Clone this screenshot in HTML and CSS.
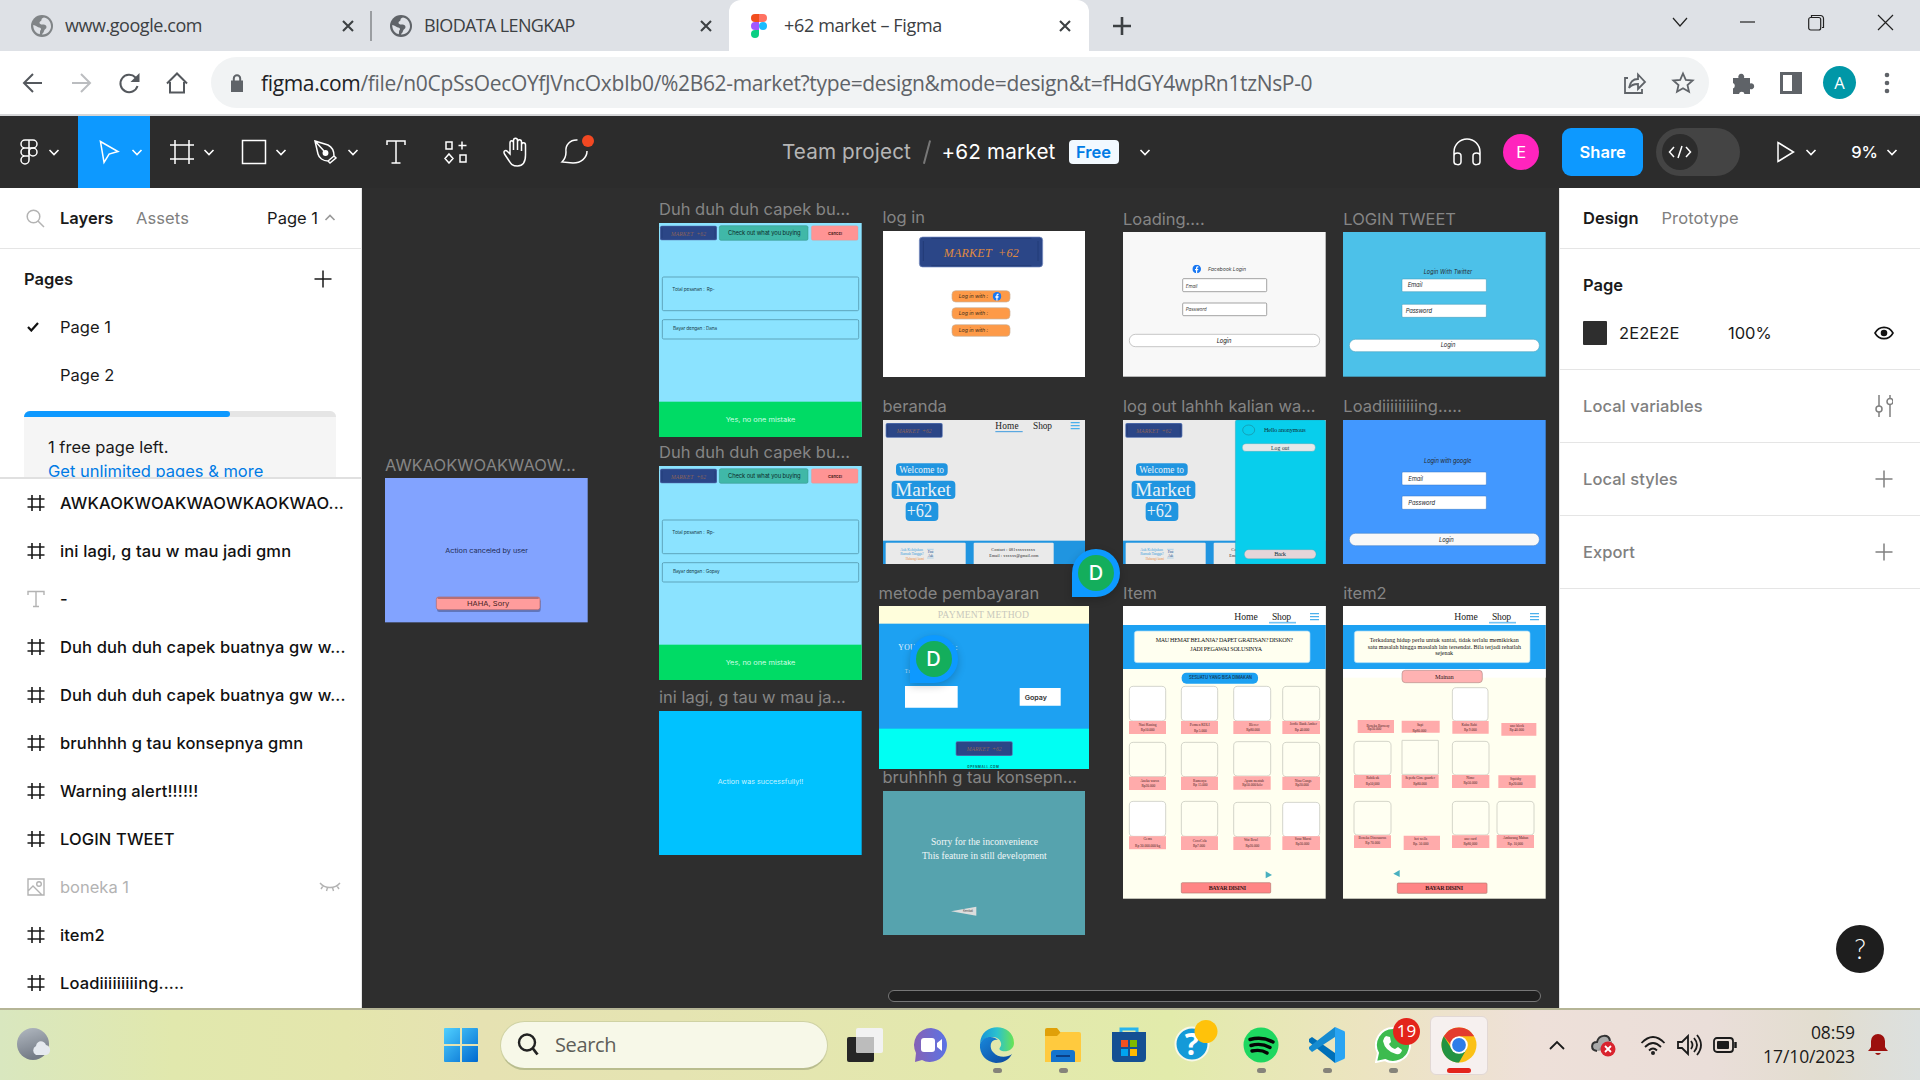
FILE: index.html
```html
<!DOCTYPE html>
<html lang="en">
<head>
<meta charset="utf-8">
<title>+62 market – Figma</title>
<link rel="stylesheet" href="styles.css">
</head>
<body>
<svg class="defs" width="0" height="0" aria-hidden="true">
  <defs>
    <symbol id="chev" viewBox="0 0 12 12"><path d="M1.5 4l4.5 4.5L10.500 4" fill="none" stroke="currentColor" stroke-width="1.6"/></symbol>
    <symbol id="x" viewBox="0 0 14 14"><path d="M2 2l10 10M12 2L2 12" stroke="currentColor" stroke-width="2.1"/></symbol>
    <symbol id="plus" viewBox="0 0 18 18"><path d="M9 .5v17M.5 9h17" stroke="currentColor" stroke-width="1.5"/></symbol>
    <symbol id="hash" viewBox="0 0 18 18"><path d="M5 1v16M13 1v16M.5 5h17M.5 13h17" stroke="currentColor" stroke-width="1.6"/></symbol>
    <symbol id="globe" viewBox="0 0 22 22"><circle cx="11" cy="11" r="11" fill="currentColor"/><path d="M13 2.500c-2 .5-2.500 1-2.500 2.500s-2 1-2 2.500 1 2 3 2 4 .5 4 2.500-2 2-2.500 4-1.500 2-2 3.500c5 .5 9-4 9-8s-2-8-7-9zM2.200 10c0 5 3 8.500 6.500 9.300.8-1.800-.2-3.300 1-4.300 1-1 0-2.500-1.700-2.500S5 10 2.200 10z" fill="#dee1e6"/></symbol>
    <symbol id="fb" viewBox="0 0 26 26"><circle cx="13" cy="13" r="13" fill="#1877f2"/><path d="M11 26v-9H8v-4h3v-3c0-3.500 2-5 5-5h2v3.500h-2c-1.200 0-1.500.7-1.500 1.700V13H18l-.7 4h-2.800v9z" fill="#fff"/></symbol>
    <g id="badge"><rect width="171" height="44" rx="5" fill="#5572b0"/><rect x="2" y="2" width="167" height="40" rx="4" fill="#2b4687"/><path d="M6 7v30M165 7v30" stroke="#223a75" stroke-width="2"/><text class="serif it" x="33" y="30" font-size="17" fill="#8a6259" textLength="105" xml:space="preserve">MARKET  +62</text></g>
    <g id="burger" stroke="#4bb0ec" stroke-width="4"><path d="M0 2h27M0 11h27M0 20h27"/></g>
    <g id="welcome">
      <rect x="39" y="130" width="155" height="37" rx="11" fill="#2095e0"/><text class="serif" x="49" y="158" font-size="28" fill="#e9f1f6" textLength="134">Welcome to</text>
      <rect x="26" y="182" width="191" height="55" rx="12" fill="#2095e0"/><text class="serif" x="36" y="227" font-size="56" fill="#e9f1f6" textLength="168" lengthAdjust="spacingAndGlyphs">Market</text>
      <rect x="68" y="246" width="98" height="57" rx="12" fill="#2095e0"/><text class="serif" x="71" y="291" font-size="54" fill="#e9f1f6" textLength="76" lengthAdjust="spacingAndGlyphs">+62</text>
      <rect y="362" width="608" height="72" fill="#2095e0"/>
      <rect x="8" y="368" width="240" height="66" rx="3" fill="#eaeaea"/><rect x="272" y="368" width="240" height="66" rx="3" fill="#eaeaea"/>
      <g class="serif" font-size="12"><text x="52" y="394" fill="#4aa5dd" textLength="68">Ask Kebijakan</text><text x="52" y="405" fill="#4aa5dd" textLength="70">Rumah Tangga?</text><text x="68" y="419" fill="#e98d42" font-size="9" textLength="55">Hubungi kami</text><text x="134" y="399" fill="#31609a" textLength="17">Fast</text><text x="134" y="411" fill="#31609a" textLength="17">Ask</text><path d="M132 388h20M132 414h20" stroke="#4aa5dd"/>
      <text x="325" y="394" fill="#222" textLength="131">Contact : 081xxxxxxxxx</text><text x="319" y="411" fill="#222" textLength="147">Email : xxxxxx@gmail.com</text></g>
    </g>
    <g id="checkout">
      <rect width="608" height="644" fill="#8be3ff"/>
      <use href="#badge" x="3" y="8"/>
      <rect x="181" y="8" width="266" height="44" rx="5" fill="#40b8a8" stroke="#339183" stroke-width="1.500"/><text x="207" y="37" font-size="17.500" fill="#0d2b2a" textLength="218">Check out what you buying</text>
      <rect x="457" y="8" width="140" height="44" rx="5" fill="#ff9494" stroke="#c9a0a5"/><text x="507" y="36" font-size="12" font-weight="600" fill="#311" textLength="42">Cancel</text>
      <rect x="10" y="162" width="589" height="101" rx="4" fill="none" stroke="#5599ae" stroke-width="2.500"/><text x="40" y="205" font-size="14" fill="#173c48" textLength="127" xml:space="preserve">Total pesanan :  Rp-</text>
      <rect x="10" y="290" width="589" height="58" rx="4" fill="none" stroke="#5599ae" stroke-width="2.500"/>
      <rect y="536" width="608" height="108" fill="#00db65"/><text x="200" y="597" font-size="19" fill="#d2ffe5" textLength="209" lengthAdjust="spacingAndGlyphs">Yes, no one mistake</text>
    </g>
    <g id="shopnav">
      <rect width="608" height="57" fill="#fff"/><text class="serif" x="334" y="41" font-size="29" fill="#222" textLength="70">Home</text><text class="serif" x="447" y="41" font-size="29" fill="#222" textLength="57">Shop</text><path d="M438 50h81" stroke="#75c4f5" stroke-width="5"/><use href="#burger" x="561" y="21"/>
      <rect y="57" width="608" height="132" fill="#1da1f2"/><rect x="34" y="75" width="527" height="95" rx="8" fill="#fffff0" stroke="#9ed7f7" stroke-width="2"/>
    </g>
  </defs>
</svg>

<header class="tabs">
  <div class="tab tab-a"><svg class="fav dim" viewBox="0 0 22 22"><use href="#globe"/></svg><span class="t1">www.google.com</span><svg class="close"><use href="#x"/></svg></div>
  <div class="tab tab-b"><svg class="fav" viewBox="0 0 22 22"><use href="#globe"/></svg><span class="t2">BIODATA LENGKAP</span><svg class="close"><use href="#x"/></svg></div>
  <div class="tab tab-on"><svg class="figfav" viewBox="0 0 16 24"><path d="M8 0H4a4 4 0 000 8h4z" fill="#f24e1e"/><path d="M8 0h4a4 4 0 010 8H8z" fill="#ff7262"/><path d="M8 8H4a4 4 0 000 8h4z" fill="#a259ff"/><circle cx="12" cy="12" r="4" fill="#1abcfe"/><path d="M8 16H4a4 4 0 104 4z" fill="#0acf83"/></svg><span class="t3">+62 market – Figma</span><svg class="close"><use href="#x"/></svg></div>
  <svg class="newtab" viewBox="0 0 18 18"><path d="M9 0v18M0 9h18" stroke="#3c4043" stroke-width="2.600"/></svg>
  <div class="win">
    <svg width="16" height="10"><path d="M1 1l7 8 7-8" class="thin"/></svg>
    <svg width="16" height="16"><path d="M0 8h15" class="thin"/></svg>
    <svg width="17" height="17"><path d="M3.500 3V1.500h9a3 3 0 013 3v9H14" class="thin"/><rect x=".7" y="3.500" width="12" height="12.500" rx="2" class="thin"/></svg>
    <svg width="17" height="17"><path d="M1 1l15 15M16 1L1 16" class="thin"/></svg>
  </div>
</header>

<nav class="addr">
  <svg width="48" height="24" viewBox="0 0 48 24" class="nv"><path d="M42 12H24M33 3l-9 9 9 9"/></svg>
  <svg width="48" height="24" viewBox="0 0 48 24" class="nv off"><path d="M24 12h18M33 3l9 9-9 9"/></svg>
  <svg width="48" height="24" viewBox="0 0 48 24" class="nv"><path d="M41.500 15A8.700 8.700 0 1139.500 6.500l1.500 2"/><path d="M43.500 2v9h-9z" class="fill"/></svg>
  <svg width="48" height="24" viewBox="0 0 48 24" class="nv"><path d="M26 11v10.500h14V11M23 12.500l10-10 10 10"/></svg>
  <div class="omni">
    <svg class="lock" width="14" height="18" viewBox="0 0 14 18"><path d="M1 6.500h12V18H1z" fill="#5f6368"/><path d="M3.800 7V4.500a3.200 3.200 0 016.400 0V7" fill="none" stroke="#5f6368" stroke-width="2"/></svg>
    <span class="url"><b>figma.com</b>/file/n0CpSsOecOYfJVncOxbIb0/%2B62-market?type=design&amp;mode=design&amp;t=fHdGY4wpRn1tzNsP-0</span>
    <svg class="oi" viewBox="0 0 24 24"><path d="M5 7H2v15h17v-4M6 17c1-6 4-9 9-9V3.500L22 11l-7 7v-5c-4 0-7 1-9 4z"/></svg>
    <svg class="oi" viewBox="0 0 24 24"><path d="M12 2.500l2.800 6.300 6.900.7-5.200 4.600 1.500 6.700-6-3.500-6 3.500 1.500-6.700-5.200-4.600 6.900-.7z"/></svg>
  </div>
  <div class="exts">
    <svg width="24" height="24" viewBox="0 0 24 24"><path d="M2 7h5.500a3 3 0 115.500 0H19v5.500a3 3 0 110 5.500v5h-5.500a2.800 2.800 0 00-5.500 0H2v-5.500a3 3 0 000-5.500z" fill="#5f6368"/></svg>
    <svg width="22" height="22" viewBox="0 0 22 22"><path d="M0 0h22v22H0zM3 3v16h9V3z" fill="#5f6368" fill-rule="evenodd"/></svg>
    <span class="me">A</span>
    <svg width="6" height="22" viewBox="0 0 6 22"><g fill="#5f6368"><circle cx="3" cy="3" r="2.300"/><circle cx="3" cy="11" r="2.300"/><circle cx="3" cy="19" r="2.300"/></g></svg>
  </div>
</nav>

<div class="fbar">
  <div class="tool logo"><svg width="18" height="26" viewBox="0 0 18 26"><path d="M9 1H5a4 4 0 000 8h4zM9 1h4a4 4 0 010 8H9zM9 9H5a4 4 0 000 8h4zM5 17a4 4 0 104 4v-4z"/><circle cx="13" cy="13" r="4"/></svg><svg class="cv"><use href="#chev"/></svg></div>
  <div class="tool on"><svg width="22" height="26" viewBox="0 0 22 26"><path d="M2 2l17 11-9 2-5.500 8z" transform="rotate(-3 11 13)"/></svg><svg class="cv"><use href="#chev"/></svg></div>
  <div class="tool"><svg width="26" height="26" viewBox="0 0 26 26"><path d="M6 1v24M20 1v24M1 6h24M1 20h24"/></svg><svg class="cv"><use href="#chev"/></svg></div>
  <div class="tool"><svg width="26" height="26" viewBox="0 0 26 26"><path d="M1.500 1.500h23v23h-23z"/></svg><svg class="cv"><use href="#chev"/></svg></div>
  <div class="tool"><svg width="26" height="26" viewBox="0 0 26 26"><path d="M2 2l13 4c4 2 6 6 6 11l2 2-6 5-2-2c-5 0-9-3-10-7zM2 2l9 10M21 17l-6 5"/><circle cx="12.500" cy="14" r="2.200" fill="#fff"/></svg><svg class="cv"><use href="#chev"/></svg></div>
  <div class="tool one"><svg width="20" height="26" viewBox="0 0 20 26"><path d="M1 6V2h18v4M10 2v22M5.500 24h9"/></svg></div>
  <div class="tool one"><svg width="24" height="24" viewBox="0 0 24 24"><path d="M2 2h6v7H2zM18 1.500v8M14.500 5.500h8M16 15h6v7h-6zM5 14l4 4.500L5 23l-4-4.500z"/></svg></div>
  <div class="tool one"><svg width="28" height="30" viewBox="0 0 28 30"><path d="M8 17V6c0-3 3.500-3 3.500 0v7V3.500c0-3 4-3 4 0V13 5c0-3 4-3 4 0v9V8c0-3 4-3 4 0v10c0 7-3 11-8 11-6 0-7-3-9-6l-4-6c-1.500-3 1-4.500 3-2.500z"/></svg></div>
  <div class="tool one"><svg class="cmt" width="34" height="34" viewBox="0 0 34 34"><path d="M17.500 6C10 5.500 5 11 6 18c0 3 0 6-4 10l11 1c8 0 14-5 14-12"/><circle cx="28" cy="7" r="6" class="dot"/></svg></div>
  <div class="title"><span class="proj">Team project</span><i></i><span class="file">+62 market</span><em>Free</em><svg class="cv"><use href="#chev"/></svg></div>
  <div class="fright">
    <svg width="30" height="28" viewBox="0 0 30 28"><path d="M2 24V14a13 13 0 0126 0v10M2 18c0-4 7-4 7 0v6c0 4-7 3-7 0zM28 18c0-4-7-4-7 0v6c0 4 7 3 7 0z"/></svg>
    <span class="av">E</span>
    <span class="share">Share</span>
    <span class="toggle"><span><svg width="24" height="14" viewBox="0 0 24 14"><path d="M6 2L1.500 7 6 12M18 2l4.500 5-4.500 5M14 1l-4 12"/></svg></span></span>
    <svg class="play" width="20" height="22" viewBox="0 0 20 22"><path d="M2 1.500v19L17.500 11z"/></svg><svg class="cv"><use href="#chev"/></svg>
    <span class="zoom">9%</span><svg class="cv"><use href="#chev"/></svg>
  </div>
</div>

<main class="work">
  <aside class="left">
    <div class="lhead"><svg width="19" height="19" viewBox="0 0 19 19"><circle cx="7.500" cy="7.500" r="6.300" fill="none" stroke="#b3b3b3" stroke-width="1.500"/><path d="M12 12l6 6" stroke="#b3b3b3" stroke-width="1.500"/></svg><b>Layers</b><span class="muted">Assets</span><span class="pg">Page 1</span><svg class="cv up"><use href="#chev"/></svg></div>
    <div class="pages">
      <div class="ph"><b>Pages</b><svg width="18" height="18"><use href="#plus"/></svg></div>
      <div class="prow"><svg width="12" height="10" viewBox="0 0 12 10"><path d="M1 5l3.300 3.500L11 1" fill="none" stroke="#111" stroke-width="2.200"/></svg>Page 1</div>
      <div class="prow"><svg width="12" height="10"></svg>Page 2</div>
      <div class="card"><div class="bar"><div></div></div><p>1 free page left.<br><a>Get unlimited pages &amp; more</a></p></div>
    </div>
    <div class="layers">
      <div class="row"><svg><use href="#hash"/></svg><b>AWKAOKWOAKWAOWKAOKWAO...</b></div>
      <div class="row"><svg><use href="#hash"/></svg><b>ini lagi, g tau w mau jadi gmn</b></div>
      <div class="row"><svg class="g" viewBox="0 0 18 18"><path d="M1 5V1.500h16V5M9 1.500v15M6 16.500h6" fill="none" stroke="currentColor" stroke-width="1.400"/></svg><b>-</b></div>
      <div class="row"><svg><use href="#hash"/></svg><b>Duh duh duh capek buatnya gw w...</b></div>
      <div class="row"><svg><use href="#hash"/></svg><b>Duh duh duh capek buatnya gw w...</b></div>
      <div class="row"><svg><use href="#hash"/></svg><b>bruhhhh g tau konsepnya gmn</b></div>
      <div class="row"><svg><use href="#hash"/></svg><b>Warning alert!!!!!!</b></div>
      <div class="row"><svg><use href="#hash"/></svg><b>LOGIN TWEET</b></div>
      <div class="row hid"><svg class="g" viewBox="0 0 18 18"><path d="M1 1h16v16H1zM1 13l5-5 9 9" fill="none" stroke="currentColor" stroke-width="1.400"/><circle cx="12" cy="6" r="2.300" fill="none" stroke="currentColor" stroke-width="1.400"/></svg><span>boneka 1</span><svg class="g eye" viewBox="0 0 22 12"><path d="M1 2c5 6 15 6 20 0M4 5L2 8M8.500 6.500L7.500 10M13.500 6.500l1 3.500M18 5l2 3" fill="none" stroke="currentColor" stroke-width="1.400"/></svg></div>
      <div class="row"><svg><use href="#hash"/></svg><b>item2</b></div>
      <div class="row"><svg><use href="#hash"/></svg><b>Loadiiiiiiiiing.....</b></div>
    </div>
  </aside>

  <section class="canvas">
    <div class="frame f-awk"><span>AWKAOKWOAKWAOW...</span>
      <svg viewBox="0 0 608 433"><rect width="608" height="433" fill="#82a3ff"/><text x="181" y="224" font-size="19" fill="#1d2b50" textLength="248" lengthAdjust="spacingAndGlyphs">Action canceled by user</text><rect x="156" y="363" width="311" height="39" rx="7" fill="#5f76bd"/><rect x="154" y="357" width="311" height="38" rx="7" fill="#ff9c9c" stroke="#a9686e" stroke-width="2"/><path d="M158 360h303" stroke="#b96f74" stroke-width="6"/><text x="246" y="383" font-size="19" fill="#421c1e" textLength="127" lengthAdjust="spacingAndGlyphs">HAHA, Sory</text></svg></div>

    <div class="frame f-duh1"><span>Duh duh duh capek bu...</span>
      <svg viewBox="0 0 608 644"><use href="#checkout"/><text x="42" y="321" font-size="14" fill="#173c48" textLength="132">Bayar dengan : Dana</text></svg></div>
    <div class="frame f-duh2"><span>Duh duh duh capek bu...</span>
      <svg viewBox="0 0 608 644"><use href="#checkout"/><text x="42" y="321" font-size="14" fill="#173c48" textLength="140">Bayar dengan : Gopay</text></svg></div>
    <div class="frame f-ini"><span>ini lagi, g tau w mau ja...</span>
      <svg viewBox="0 0 608 434"><rect width="608" height="434" fill="#00c2ff"/><text x="176" y="218" font-size="20" fill="#c8f3ff" textLength="257" lengthAdjust="spacingAndGlyphs">Action was successfully!!</text></svg></div>

    <div class="frame f-login"><span>log in</span>
      <svg viewBox="0 0 608 438"><rect width="608" height="438" fill="#fff"/><rect x="109" y="18" width="370" height="90" rx="10" fill="#2b4687" stroke="#7890c4" stroke-width="2"/><path d="M121 30v60M465 30v60M145 22h300M145 104h300" stroke="#203770" stroke-width="2"/><text class="serif it" x="182" y="79" font-size="36" fill="#e08b3e" textLength="225" xml:space="preserve">MARKET  +62</text>
        <g fill="#fd9a48" stroke="#c9b49f" stroke-width="2"><rect x="207" y="179" width="174" height="34" rx="11"/><rect x="207" y="230" width="174" height="34" rx="11"/><rect x="207" y="281" width="174" height="35" rx="11"/></g>
        <g class="it" font-size="16" fill="#46311d"><text x="227" y="202" textLength="88">Log in with :</text><text x="227" y="253" textLength="88">Log in with :</text><text x="227" y="304" textLength="88">Log in with :</text></g><use href="#fb" x="329" y="183" width="26" height="26"/></svg></div>
    <div class="frame f-beranda"><span>beranda</span>
      <svg viewBox="0 0 608 433"><rect width="608" height="433" fill="#eaeaea"/><use href="#badge" x="8" y="9"/><use href="#welcome"/><text class="serif" x="337" y="26" font-size="28" fill="#222" textLength="70">Home</text><text class="serif" x="450" y="26" font-size="28" fill="#222" textLength="57">Shop</text><path d="M337 35h82" stroke="#3d9ade" stroke-width="3"/><use href="#burger" x="563" y="6"/></svg></div>
    <div class="frame wide f-metode"><span>metode pembayaran</span>
      <svg viewBox="0 0 632 489"><rect width="632" height="489" fill="#1da1f2"/><rect width="632" height="53" fill="#fffedc"/><text class="serif" x="176" y="36" font-size="29" fill="#c8c8bc" textLength="274">PAYMENT METHOD</text><text class="serif" x="58" y="132" font-size="23" fill="#e4f4fd" textLength="178">YOUR CHOICE :</text><text class="serif" x="77" y="200" font-size="16" fill="#b8ddf5" textLength="60">Try use</text><path d="M78 240h158v65H78zM422 246h123v53H422z" fill="#fff"/><text x="437" y="281" font-size="19" font-weight="600" fill="#333" textLength="67" lengthAdjust="spacingAndGlyphs">Gopay</text><rect y="368" width="632" height="121" fill="#00fff3"/><use href="#badge" x="230" y="406"/><text x="265" y="485" font-size="9" font-weight="700" fill="#066" textLength="94">OPENMALL.COM</text></svg></div>
    <div class="frame f-bruh"><span>bruhhhh g tau konsepn...</span>
      <svg viewBox="0 0 608 434"><rect width="608" height="434" fill="#56a3ae"/><g class="serif" font-size="28" fill="#f0f7f8"><text x="144" y="162" textLength="321" lengthAdjust="spacingAndGlyphs">Sorry for the inconvenience</text><text x="117" y="204" textLength="374" lengthAdjust="spacingAndGlyphs">This feature in still development</text></g><path d="M204 361l76-14v27z" fill="#ddd"/><text x="240" y="364" font-size="9" fill="#555" textLength="30">Kembali</text></svg></div>

    <div class="frame f-loading"><span>Loading....</span>
      <svg viewBox="0 0 608 434"><rect width="608" height="434" fill="#f8f8f8"/><use href="#fb" x="208" y="98" width="26" height="26"/><g fill="#fff" stroke="#777" stroke-width="2"><rect x="179" y="140" width="252" height="39" rx="3"/><rect x="179" y="213" width="252" height="38" rx="3"/><rect x="19" y="307" width="571" height="37" rx="18" stroke="#aaa"/></g><g class="it" fill="#444" font-size="14"><text x="255" y="116" font-size="15.500" textLength="114">Facebook Login</text><text x="188" y="167" textLength="35">Email</text><text x="188" y="236" textLength="63">Password</text><text x="281" y="332" font-size="17.500" fill="#222" textLength="44">Login</text></g></svg></div>
    <div class="frame f-logout"><span>log out lahhh kalian wa...</span>
      <svg viewBox="0 0 608 433"><rect width="608" height="433" fill="#eaeaea"/><use href="#badge" x="7" y="9"/><use href="#welcome"/><rect x="337" width="271" height="433" rx="5" fill="#08ceec" stroke="#3890a0"/><ellipse cx="377" cy="30" rx="18" ry="15" fill="none" stroke="#237684" stroke-width="1.500"/><g class="serif" fill="#10343a" font-size="19"><text x="423" y="36" textLength="125">Hello anonymous</text><rect x="358" y="71" width="219" height="23" rx="11" fill="#e6e9ea" stroke="#5c9aa3"/><text x="444" y="89" font-size="17" textLength="55">Log out</text><rect x="364" y="389" width="215" height="27" rx="13" fill="#e5d5d9" stroke="#5c9aa3"/><text x="454" y="409" textLength="35">Back</text></g></svg></div>
    <div class="frame f-tweet"><span>LOGIN TWEET</span>
      <svg viewBox="0 0 608 434"><rect width="608" height="434" fill="#4cc1e9"/><g fill="#fff" stroke="#3b97b6" stroke-width="1.500"><rect x="177" y="141" width="253" height="38" rx="3"/><rect x="177" y="217" width="253" height="39" rx="3"/><rect x="19" y="322" width="570" height="37" rx="18"/></g><g class="it" fill="#262b30" font-size="17.500"><text x="242" y="125" font-size="16.500" textLength="145">Login With Twitter</text><text x="194" y="166" textLength="44">Email</text><text x="188" y="243" textLength="79">Password</text><text x="293" y="346" textLength="44">Login</text></g></svg></div>
    <div class="frame f-google"><span>Loadiiiiiiiiing.....</span>
      <svg viewBox="0 0 608 433"><rect width="608" height="433" fill="#4298ff"/><g fill="#fff" stroke="#3576c5" stroke-width="1.500"><rect x="177" y="156" width="253" height="39" rx="3"/><rect x="177" y="228" width="253" height="40" rx="3"/><rect x="19" y="340" width="570" height="37" rx="18" fill="#f8f8f8"/></g><g class="it" fill="#262b30" font-size="17.500"><text x="243" y="129" textLength="142">Login with google</text><text x="196" y="182" textLength="44">Email</text><text x="196" y="256" textLength="80">Password</text><text x="288" y="365" textLength="44">Login</text></g></svg></div>

    <div class="frame f-item"><span>Item</span>
      <svg viewBox="0 0 608 878"><rect width="608" height="878" fill="#fffff0"/><use href="#shopnav"/>
        <g class="serif" font-size="18" fill="#111"><text x="98" y="109" textLength="412">MAU HEMAT BELANJA? DAPET GRATISAN? DISKON?</text><text x="202" y="134" textLength="215">JADI PEGAWAI SOLUSINYA</text></g>
        <rect x="176" y="200" width="229" height="33" rx="14" fill="#1da1f2"/><text x="198" y="220" font-size="12.500" font-weight="600" fill="#123c60" textLength="189">SESUATU YANG BISA DIMAKAN</text>
        <g class="box"><rect class="w" x="19" y="241" width="109" height="104" rx="12"/><rect class="w" x="175" y="241" width="109" height="104" rx="12"/><rect class="w" x="332" y="241" width="111" height="104" rx="12"/><rect x="479" y="241" width="111" height="104" rx="12"/>
        <rect x="19" y="409" width="109" height="103" rx="12"/><rect x="175" y="409" width="109" height="103" rx="12"/><rect x="332" y="407" width="111" height="103" rx="12"/><rect x="479" y="409" width="111" height="103" rx="12"/>
        <rect class="w" x="19" y="586" width="109" height="105" rx="12"/><rect x="175" y="586" width="109" height="105" rx="12"/><rect x="332" y="589" width="111" height="103" rx="12"/><rect class="w" x="479" y="589" width="111" height="103" rx="12"/></g>
        <path class="pink" d="M18 345h111v39H18zM174 345h111v39H174zM331 345h112v39H331zM478 345h113v39H478zM18 512h111v40H18zM174 512h111v40H174zM331 511h112v40H331zM478 512h113v40H478zM18 691h111v39H18zM174 691h111v41H174zM331 692h112v40H331zM478 691h113v41H478z"/>
        <g class="tiny"><text x="74" y="360">Nasi Kuning</text><text x="74" y="374">Rp10.000</text><text x="230" y="360">Permen KOLI</text><text x="232" y="377">Rp 5.000</text><text x="392" y="360">Blever</text><text x="390" y="374">Rp80.000</text><text x="541" y="357">Jordie Bank Amber</text><text x="537" y="374">Rp 40.000</text>
        <text x="80" y="529">Aneka waroz</text><text x="76" y="542">Rp20.000</text><text x="230" y="527">Ramenya</text><text x="232" y="541">Rp 15.000</text><text x="393" y="527">Ayam mentah</text><text x="388" y="541">Rp50.000/kilo</text><text x="540" y="527">Nina Gangs</text><text x="537" y="541">Rp20.000</text>
        <text x="74" y="703">Gems</text><text x="74" y="724">Rp 30.000.000/kg</text><text x="230" y="708">CocoCola</text><text x="228" y="723">Rp7.000</text><text x="384" y="705">Wat Bowl</text><text x="388" y="724">Rp20.000</text><text x="540" y="703">Susu Murni</text><text x="538" y="718">Rp30.000</text></g>
        <path d="M428 796v21l19-10z" fill="#49b0bf"/><rect x="175" y="830" width="268" height="31" rx="3" fill="#ff8585" stroke="#b57871" stroke-width="2"/><text class="serif" x="257" y="852" font-size="18" font-weight="600" fill="#3b1717" textLength="112">BAYAR DISINI</text></svg></div>
    <div class="frame f-item2"><span>item2</span>
      <svg viewBox="0 0 608 878"><rect width="608" height="878" fill="#fffff0"/><rect y="188" width="608" height="27" fill="#fff"/><use href="#shopnav"/>
        <g class="serif" font-size="18" fill="#111"><text x="80" y="108" textLength="447">Terkadang hidup perlu untuk santai, tidak terlalu memikirkan</text><text x="74" y="128" textLength="460">satu masalah hingga masalah lain tersendat. Bila terjadi rehatlah</text><text x="277" y="147" textLength="53">sejenak</text></g>
        <rect x="177" y="193" width="241" height="37" rx="10" fill="#ffb2b2" stroke="#9b7c78" stroke-width="1.500"/><text class="serif" x="276" y="218" font-size="19" fill="#301818" textLength="56">Mainan</text>
        <g class="box"><rect class="w" x="328" y="245" width="107" height="100" rx="12"/><rect x="33" y="406" width="111" height="101" rx="12"/><rect x="177" y="403" width="109" height="102" rx="1"/><rect x="328" y="406" width="110" height="101" rx="12"/><rect x="33" y="586" width="111" height="101" rx="12"/><rect x="328" y="586" width="110" height="101" rx="12"/><rect x="462" y="586" width="111" height="101" rx="12"/></g>
        <path class="pink" d="M44 342h109v39H44zM176 344h114v36H176zM328 345h109v38H328zM475 351h105v38H475zM33 507h111v39H33zM176 507h111v39H176zM327 507h112v39H327zM466 508h112v38H466zM33 688h111v38H33zM182 689h109v43H182zM327 688h112v38H327zM461 687h112v39H461z"/>
        <g class="tiny"><text x="105" y="362">Boneka Barneay</text><text x="94" y="373">Rp30.000</text><text x="231" y="359">Sapi</text><text x="229" y="377">Rp80.000</text><text x="379" y="359">Kubu Rubi</text><text x="382" y="374">Rp 9.000</text><text x="522" y="363">uno block</text><text x="521" y="376">Rp 40.000</text>
        <text x="89" y="518">Rubik uk</text><text x="89" y="536">Rp50,000</text><text x="231" y="518">Sepeda Gim. guarder</text><text x="231" y="537">Rp80.000</text><text x="382" y="518">Nimo</text><text x="382" y="534">Rp50.000</text><text x="518" y="523">Squishy</text><text x="518" y="537">Rp20.000</text>
        <text x="88" y="698">Boneka Dinosaurus</text><text x="89" y="713">Rp 70.000</text><text x="233" y="703">hot wells</text><text x="233" y="718">Rp. 50.000</text><text x="382" y="703">uno card</text><text x="382" y="716">Rp80,000</text><text x="518" y="698">Ambarang Mahan</text><text x="517" y="716">Rp. 10,000</text></g>
        <path d="M170 792v21l-19-10z" fill="#49b0bf"/><rect x="163" y="831" width="269" height="31" rx="3" fill="#ff8585" stroke="#b57871" stroke-width="2"/><text class="serif" x="247" y="852" font-size="18" font-weight="600" fill="#3b1717" textLength="113">BAYAR DISINI</text></svg></div>

    <div class="pin p1"><span>D</span></div>
    <div class="pin p2"><span>D</span></div>
    <div class="scroll"></div>
  </section>

  <aside class="right">
    <div class="rhead"><b>Design</b><span class="muted">Prototype</span></div>
    <div class="rpage"><b>Page</b><div class="fillrow"><i></i><span class="hex">2E2E2E</span><span class="pct">100%</span><svg width="20" height="14" viewBox="0 0 20 14"><path d="M1 7c4-7.500 14-7.500 18 0-4 7.500-14 7.500-18 0z" fill="none" stroke="#111" stroke-width="1.600"/><circle cx="10" cy="7" r="3.300" fill="#111"/></svg></div></div>
    <div class="rsec"><b>Local variables</b><svg width="18" height="22" viewBox="0 0 18 22"><path d="M4 0v11M4 17v5M15 0v3.500M15 9.500V22" stroke="#808080" stroke-width="1.500"/><circle cx="4" cy="14" r="3" fill="none" stroke="#808080" stroke-width="1.500"/><circle cx="15" cy="6.500" r="3" fill="none" stroke="#808080" stroke-width="1.500"/></svg></div>
    <div class="rsec"><b>Local styles</b><svg width="18" height="18"><use href="#plus"/></svg></div>
    <div class="rsec"><b>Export</b><svg width="18" height="18"><use href="#plus"/></svg></div>
    <span class="help">?</span>
  </aside>
</main>

<footer class="taskbar">
  <div class="ic weather"><svg width="36" height="36" viewBox="0 0 36 36"><defs><linearGradient id="wg" x2=".3" y2="1"><stop stop-color="#b2b9c1"/><stop offset="1" stop-color="#747b86"/></linearGradient></defs><circle cx="17" cy="17" r="16" fill="url(#wg)"/><path d="M20 28a5 5 0 010-9c1-6 8-6 10-1 6 1 5 10 0 10z" fill="#e5e9ef"/></svg></div>
  <div class="ic start"><svg width="36" height="36" viewBox="0 0 36 36"><defs><linearGradient id="ws" x2="1" y2="1"><stop stop-color="#4fd0ff"/><stop offset="1" stop-color="#0069cf"/></linearGradient></defs><path d="M1 2q0-1 1-1h15v16H1zM19 1h15q1 0 1 1v15H19zM1 19h16v16H2q-1 0-1-1zM19 19h16v15q0 1-1 1H19z" fill="url(#ws)"/></svg></div>
  <div class="search"><svg width="24" height="24" viewBox="0 0 24 24"><circle cx="11" cy="9.500" r="8" fill="none" stroke="#222" stroke-width="2.400"/><path d="M16.500 15l5 6.500" stroke="#222" stroke-width="2.800"/></svg><span>Search</span></div>
  <div class="ic"><svg width="36" height="36" viewBox="0 0 36 36"><rect y="10" width="27" height="25" rx="2" fill="#262626"/><rect x="9" y="1" width="27" height="25" rx="2" fill="#f2f2f2"/><path d="M9 10h18v16H11q-2 0-2-2z" fill="#bcbcbc"/></svg></div>
  <div class="ic"><svg width="36" height="36" viewBox="0 0 36 36"><defs><linearGradient id="ch" x2="1"><stop stop-color="#8661b5"/><stop offset="1" stop-color="#5b73e5"/></linearGradient></defs><path d="M18 1a17 17 0 11-9 32l-7 2 1-9A17 17 0 0118 1z" fill="url(#ch)"/><rect x="8" y="11" width="14" height="14" rx="3" fill="#fff"/><path d="M24 16l5-4v12l-5-4z" fill="#fff"/></svg></div>
  <div class="ic run"><svg width="36" height="36" viewBox="0 0 36 36"><defs><linearGradient id="e1" x2="1"><stop stop-color="#1593d9"/><stop offset=".5" stop-color="#2bc1cf"/><stop offset="1" stop-color="#69e452"/></linearGradient><linearGradient id="e2" x2="1" y2="1"><stop stop-color="#1888dc"/><stop offset="1" stop-color="#0d4599"/></linearGradient></defs><path d="M1 17C2-6 35-4 35 16c0 8-10 10-14 7-2-2 2-3 1-7C20 8 6 8 1 17z" fill="url(#e1)"/><path d="M1 17c3-8 13-9 18-4-8-2-9 8-5 12 5 6 14 6 19 2-3 6-9 9-16 9C7 35 0 27 1 17z" fill="url(#e2)"/></svg></div>
  <div class="ic run"><svg width="36" height="36" viewBox="0 0 36 36"><path d="M0 3q0-2 2-2h10l4 5v6H0z" fill="#e0a008"/><path d="M0 9h12l4-4h18q2 0 2 2v27q0 1-1 1H0z" fill="#ffca3e"/><path d="M6 35V26q0-3 3-3h18q3 0 3 3v9z" fill="#1474ce"/><rect x="11" y="28" width="14" height="2" fill="#0b3f85"/></svg></div>
  <div class="ic"><svg width="36" height="36" viewBox="0 0 36 36"><path d="M10 8V2h16v6" fill="none" stroke="#27b5ee" stroke-width="3"/><path d="M1 5h34v26q0 4-4 4H5q-4 0-4-4z" fill="#155093"/><path d="M10 13h7v7h-7z" fill="#f25022"/><path d="M19 13h7v7h-7z" fill="#7fba00"/><path d="M10 22h7v7h-7z" fill="#00a4ef"/><path d="M19 22h7v7h-7z" fill="#ffb900"/></svg></div>
  <div class="ic"><svg class="q" width="50" height="50" viewBox="0 0 50 50"><circle cx="24" cy="24" r="16.500" fill="#149ad8" stroke="#f8f8e8" stroke-width="2"/><text x="24" y="34.500" text-anchor="middle" font-size="30" font-weight="700" fill="#fff">?</text><circle cx="38" cy="11.500" r="11.500" fill="#ffc20a"/></svg></div>
  <div class="ic run"><svg width="36" height="36" viewBox="0 0 36 36"><circle cx="18" cy="18" r="17.500" fill="#1ed760"/><path d="M7 12.500q12-3.500 23 2.500M8 18.500q10-3 19 2M9 24q9-2 15 2" fill="none" stroke="#050505" stroke-width="3.400" stroke-linecap="round"/></svg></div>
  <div class="ic run"><svg width="36" height="36" viewBox="0 0 36 36"><path d="M0 12l3-2 23 16v10L0 15z" fill="#0070b8"/><path d="M0 22l3 3L26 10V0L0 20z" fill="#168bd0"/><path d="M26 0l9 4q1 0 1 2v24q0 2-1 2l-9 4z" fill="#29a4f3"/></svg></div>
  <div class="ic run wa"><svg width="36" height="36" viewBox="0 0 36 36"><path d="M18 1a17 17 0 11-8 32L1 35l2-9A17 17 0 0118 1z" fill="#3dbb4f" stroke="#fff" stroke-width="2"/><path d="M11 9l4 1 1 5-2 2q2 4 6 5l3-2 4 3q-1 5-6 4Q10 24 8 14q1-4 3-5z" fill="#fff"/></svg><b>19</b></div>
  <div class="ic act"><svg width="36" height="36" viewBox="0 0 36 36"><circle cx="18" cy="18" r="17.500" fill="#fbc116"/><path d="M2.800 9.300A17.500 17.500 0 0133.200 9.300H18L10 18z" fill="#e33b2e"/><path d="M2.800 9.300A17.500 17.500 0 0018 35.500l7.500-13.200H11z" fill="#229342"/><circle cx="18" cy="18" r="8.800" fill="#fff"/><circle cx="18" cy="18" r="6.900" fill="#2f7de9"/></svg></div>
  <div class="tray">
    <svg width="18" height="10" viewBox="0 0 18 10"><path d="M2 9l7-7 7 7" class="tk"/></svg>
    <svg width="26" height="24" viewBox="0 0 26 24"><path d="M6 18C-1 17 0 9 6 9 8 1 18 1 19 8" fill="#aaa" stroke="#333" stroke-width="2"/><path d="M6 18q8-10 15-10v8z" fill="#999"/><circle cx="17" cy="16" r="7.500" fill="#d9232e"/><path d="M14 13l6 6M20 13l-6 6" stroke="#fff" stroke-width="1.800"/></svg>
    <svg width="26" height="20" viewBox="0 0 26 20"><path d="M1.500 8q11.500-12 23 0M5 12q8-8 16 0M9 15.500q4-4 8 0" class="tk"/><circle cx="13" cy="18" r="2" fill="#222"/></svg>
    <svg width="26" height="22" viewBox="0 0 26 22"><path d="M2 8h4l6-6v18l-6-6H2zM15 7q3 4 0 8M18 4q6 7 0 14M21 1q8 10 0 20" class="tk"/></svg>
    <svg width="26" height="18" viewBox="0 0 26 18"><rect x="2" y="2" width="19" height="14" rx="3" class="tk"/><rect x="5" y="5" width="12" height="8" rx="1" fill="#1b1b1b"/><path d="M23.500 6v6" stroke="#1b1b1b" stroke-width="2.500"/></svg>
    <div class="clock"><span>08:59</span><span>17/10/2023</span></div>
    <svg width="22" height="24" viewBox="0 0 22 24"><path d="M1 18q2-2 3-4V8a7 7 0 0114 0v6q1 2 3 4zM8 20h6q-3 4-6 0z" fill="#9c100d"/></svg>
  </div>
</footer>
</body>
</html>
```
FILE: styles.css
```css
* { box-sizing: border-box; }
body { margin: 0; width: 1920px; height: 1080px; overflow: hidden; display: flex; flex-direction: column; font: 16.5px/20px Inter, "Liberation Sans", sans-serif; color: #1a1a1a; background: #fff; }
svg { flex: none; display: block; }
.defs { position: absolute; }
b { font-weight: 600; }

/* browser tabs */
.tabs { height: 51px; background: #dee1e6; display: flex; align-items: center; font: 18px/24px "Open Sans", "Noto Sans", sans-serif; color: #3c4043; }
.tab { display: flex; align-items: center; height: 51px; }
.tab span { flex: 1; white-space: nowrap; margin-top: -2px; }
.tab-a { width: 372px; padding: 0 17px 0 31px; position: relative; }
.tab-a::after { content: ""; width: 2px; height: 30px; background: #9a9da1; position: absolute; right: 0; }
.tab-b { width: 357px; padding: 0 16px 0 18px; }
.tab-on { width: 360px; padding: 0 17px 0 22px; background: #fff; border-radius: 12px 12px 0 0; }
.fav { width: 22px; height: 22px; margin-right: 12px; color: #5f6368; }
.dim { color: #808487; }
.figfav { width: 16px; height: 24px; margin-right: 17px; }
.close { width: 14px; height: 14px; }
.newtab { width: 18px; height: 18px; margin-left: 24px; }
.t1 { letter-spacing: -.45px; }
.t2 { letter-spacing: -.65px; }
.t3 { letter-spacing: -.35px; }
.win { margin-left: auto; display: flex; align-items: center; gap: 52px; padding-right: 26px; height: 44px; margin-bottom: 7px; }
.thin { fill: none; stroke: #222; stroke-width: 1.2; }

/* address bar */
.addr { height: 65px; border-bottom: 2px solid #d5d6d8; display: flex; align-items: center; background: #fff; }
.nv { fill: none; stroke: #54585d; stroke-width: 2; }
.nv.off { stroke: #bbbdc0; }
.nv .fill { fill: #54585d; stroke: none; }
.omni { width: 1498px; height: 51px; margin-left: 19px; border-radius: 26px; background: #f1f3f4; display: flex; align-items: center; padding: 0 14px 0 19px; gap: 24px; }
.url { flex: 1; font: 21px/28px "Open Sans", "Noto Sans", sans-serif; color: #5f6368; letter-spacing: -.34px; white-space: nowrap; }
.lock { margin-right: -7px; }
.url b { font-weight: 400; color: #202124; }
.oi { width: 24px; height: 24px; fill: none; stroke: #5f6368; stroke-width: 1.8; }
.exts { display: flex; align-items: center; margin-left: auto; padding-right: 30px; gap: 25px; }
.me { width: 33px; height: 33px; border-radius: 50%; background: #0097a7; color: #fff; display: grid; place-items: center; margin: 0 3px 0 -4px; font-family: "Open Sans", sans-serif; }

/* editor toolbar */
.fbar { height: 72px; background: #2c2c2c; color: #fff; display: flex; align-items: center; }
.fbar svg { fill: none; stroke: #fff; stroke-width: 1.5; }
.tool { width: 72px; height: 72px; display: flex; align-items: center; justify-content: center; gap: 8px; padding-left: 12px; }
.tool.logo { width: 78px; gap: 10px; padding-left: 2px; }
.tool.on { background: #0d99ff; gap: 10px; padding-left: 13px; }
.tool.one { width: 60px; padding-left: 0; }
.cmt { transform: translate(1px, -1px); }
.fbar .dot { fill: #f24822; stroke: none; }
.cv { width: 12px; height: 12px; }
.title { display: flex; align-items: center; margin-left: 176px; font-size: 20.700px; line-height: 28px; white-space: nowrap; }
.proj { width: 144px; color: #b5b5b5; letter-spacing: .1px; }
.title i { width: 1.5px; height: 24px; background: #777; transform: rotate(15deg); margin-right: 14px; }
.file { width: 127px; letter-spacing: .15px; }
.title em { width: 50px; height: 24px; border-radius: 4px; background: #f2f9ff; color: #007be5; font: 600 16.5px/24px Inter, sans-serif; text-align: center; margin-right: 20px; }
.fright { margin-left: auto; display: flex; align-items: center; padding-right: 22px; }
.av { width: 36px; height: 36px; border-radius: 50%; background: #ff24bd; display: grid; place-items: center; margin: 0 23px 0 21px; }
.share { width: 81px; height: 48px; border-radius: 9px; background: #0d99ff; font-weight: 600; display: grid; place-items: center; margin-right: 13px; }
.toggle { width: 84px; height: 48px; border-radius: 24px; background: #444; padding: 6px; margin-right: 36px; }
.toggle span { width: 36px; height: 36px; border-radius: 50%; background: #2c2c2c; display: grid; place-items: center; }
.play { margin-right: 9px; }
.zoom { margin: 0 8px 0 34px; font-weight: 500; }

/* workspace */
.work { height: 820px; display: flex; }
.left { width: 362px; border-right: 1px solid #e5e5e5; display: flex; flex-direction: column; background: #fff; white-space: nowrap; }
.lhead { height: 61px; border-bottom: 1px solid #e5e5e5; display: flex; align-items: center; padding: 0 25px 0 26px; }
.lhead b { margin-left: 15px; width: 76px; }
.muted { color: #808080; letter-spacing: .1px; }
.pg { margin-left: auto; margin-right: 6px; }
.up { transform: rotate(180deg); color: #999; }
.pages { height: 230px; border-bottom: 2px solid #e0e0e0; overflow: hidden; padding: 6px 25px 0 24px; }
.ph { height: 48px; display: flex; align-items: center; justify-content: space-between; padding-right: 4px; }
.prow { height: 48px; display: flex; align-items: center; gap: 21px; padding-left: 3px; }
.card { margin-top: 12px; background: #f5f5f5; border-radius: 6px 6px 0 0; overflow: hidden; height: 90px; }
.bar { height: 6px; background: #e5e5e5; }
.bar div { width: 66%; height: 6px; background: #0d99ff; border-radius: 0 3px 3px 0; }
.card p { margin: 18px 24px; line-height: 24px; }
.card a { color: #007be5; }
.layers { flex: 1; overflow: hidden; }
.row { height: 48px; display: flex; align-items: center; padding: 0 20px 0 27px; gap: 15px; }
.row svg { width: 18px; height: 18px; }
.row b { font-weight: 500; color: #111; letter-spacing: .13px; }
.row .g { color: #b3b3b3; }
.hid { color: #b3b3b3; }
.row .eye { width: 22px; height: 12px; margin-left: auto; }

/* canvas: frames sit at free positions */
.canvas { width: 1197px; position: relative; background: #2e2e2e; overflow: hidden; }
.frame { position: absolute; width: 202.7px; display: flex; flex-direction: column; }
.frame.wide { width: 210.7px; }
.frame > span { height: 22.5px; line-height: 19px; color: #858585; white-space: nowrap; font-size: 16.5px; }
.frame svg { width: 100%; font-family: Inter, sans-serif; }
.frame svg .serif { font-family: "Liberation Serif", serif; }
.serif { font-family: "Liberation Serif", serif; }
.it { font-style: italic; }
.box rect { fill: #fffff2; stroke: #a9aaa0; stroke-width: 1.5; }
.box .w { fill: #fff; }
.pink { fill: #ffabab; }
.tiny { font: 10.5px "Liberation Serif", serif; fill: #4a2424; text-anchor: middle; }
.f-awk { left: 23px; top: 267.8px; }
.f-duh1 { left: 297px; top: 12.200px; }
.f-duh2 { left: 297px; top: 255.200px; }
.f-ini { left: 297px; top: 500px; }
.f-login { left: 520.500px; top: 20.200px; }
.f-beranda { left: 520.500px; top: 209px; }
.f-metode { left: 516.500px; top: 395.500px; }
.f-bruh { left: 520.500px; top: 580px; }
.f-loading { left: 761px; top: 21.500px; }
.f-logout { left: 761px; top: 209px; }
.f-item { left: 761px; top: 395.500px; }
.f-tweet { left: 981.300px; top: 21.500px; }
.f-google { left: 981.300px; top: 209px; }
.f-item2 { left: 981.300px; top: 395.500px; }
.pin { position: absolute; width: 48px; height: 48px; border-radius: 50% 50% 50% 0; background: #0d99ff; padding: 6px; box-shadow: 0 3px 8px rgba(0, 0, 0, .2); }
.pin span { width: 36px; height: 36px; border-radius: 50%; background: #14ae5c; color: #fff; display: grid; place-items: center; font-size: 20px; font-weight: 500; }
.p1 { left: 710px; top: 361px; }
.p2 { left: 547.500px; top: 447px; }
.scroll { position: absolute; left: 526px; top: 802px; width: 653px; height: 12px; border: 1.5px solid #777; border-radius: 6px; background: #1f1f1f; }

/* properties panel */
.right { flex: 1; background: #fff; position: relative; border-left: 1px solid #e5e5e5; }
.rhead { height: 61px; border-bottom: 1px solid #e5e5e5; display: flex; align-items: center; gap: 23px; padding-left: 23px; }
.rpage { height: 121px; border-bottom: 1px solid #e5e5e5; padding: 26px 26px 0 23px; }
.fillrow { display: flex; align-items: center; height: 24px; margin-top: 26px; }
.fillrow i { width: 24px; height: 24px; background: #2e2e2e; border-radius: 1px; margin: 0 12px 0 0; }
.hex { width: 109px; letter-spacing: .1px; }
.fillrow svg { margin-left: auto; }
.rsec { height: 73px; border-bottom: 1px solid #e5e5e5; display: flex; align-items: center; justify-content: space-between; padding: 0 27px 0 23px; color: #808080; }
.rsec b { font-weight: 500; letter-spacing: .06px; }
.help { position: absolute; right: 36px; top: 737px; width: 48px; height: 48px; border-radius: 50%; background: #1e1e1e; color: #fff; display: grid; place-items: center; font: 300 27px/30px Lato, sans-serif; }

/* taskbar */
.taskbar { height: 72px; border-top: 2px solid #b5b596; display: flex; align-items: center; font-family: "Open Sans", "Noto Sans", sans-serif; background: linear-gradient(90deg, #d9e7bf 0, #e1e8ad 9%, #e4e6ad 18%, #e6e2b2 25%, #e5e4b2 35%, #e3e8ad 50%, #e2ebab 61%, #ece4c0 71%, #eee0d9 80%, #eaded9 89%, #e2ddcf 95%, #dce0df 100%); }
.ic { width: 66px; height: 70px; display: grid; place-items: center; position: relative; }
.weather svg { margin-left: 2px; }
.start { margin-left: 362px; }
.search { width: 328px; height: 49px; border-radius: 25px; margin: 0 4px 0 6px; background: #f7f8e8; border: 1px solid #cfd2a3; border-bottom: 2px solid #b9bd8e; display: flex; align-items: center; padding-left: 15px; gap: 15px; font-size: 20px; letter-spacing: -.35px; color: #5e5e58; }
.q { transform: translateX(-2px); }
.run::after, .act::after { content: ""; position: absolute; bottom: 7px; width: 9px; height: 5px; border-radius: 3px; background: #85837a; }
.act::before { content: ""; position: absolute; width: 56px; height: 57px; top: 6px; border-radius: 6px; background: #f6f0ef; border: 1px solid #e2d8d4; }
.act svg { position: relative; }
.act::after { width: 24px; background: #e3241b; }
.wa b { position: absolute; right: 6px; top: 8px; width: 27px; height: 27px; border-radius: 14px; background: #e3241b; color: #fff; font: 17px/26px "Open Sans", sans-serif; text-align: center; }
.tray { margin-left: auto; display: flex; align-items: center; padding-right: 31px; }
.tray svg { margin-right: 10px; }
.tray svg:first-child { margin-right: 25px; }
.tray svg:nth-child(2) { margin-right: 23px; }
.tray svg:last-child { margin: 0; }
.tk { fill: none; stroke: #1b1b1b; stroke-width: 1.8; }
.clock { width: 107px; display: flex; flex-direction: column; align-items: flex-end; font-size: 17.500px; line-height: 24px; letter-spacing: -.1px; margin: -3px 12px 0 0; white-space: nowrap; }
```
